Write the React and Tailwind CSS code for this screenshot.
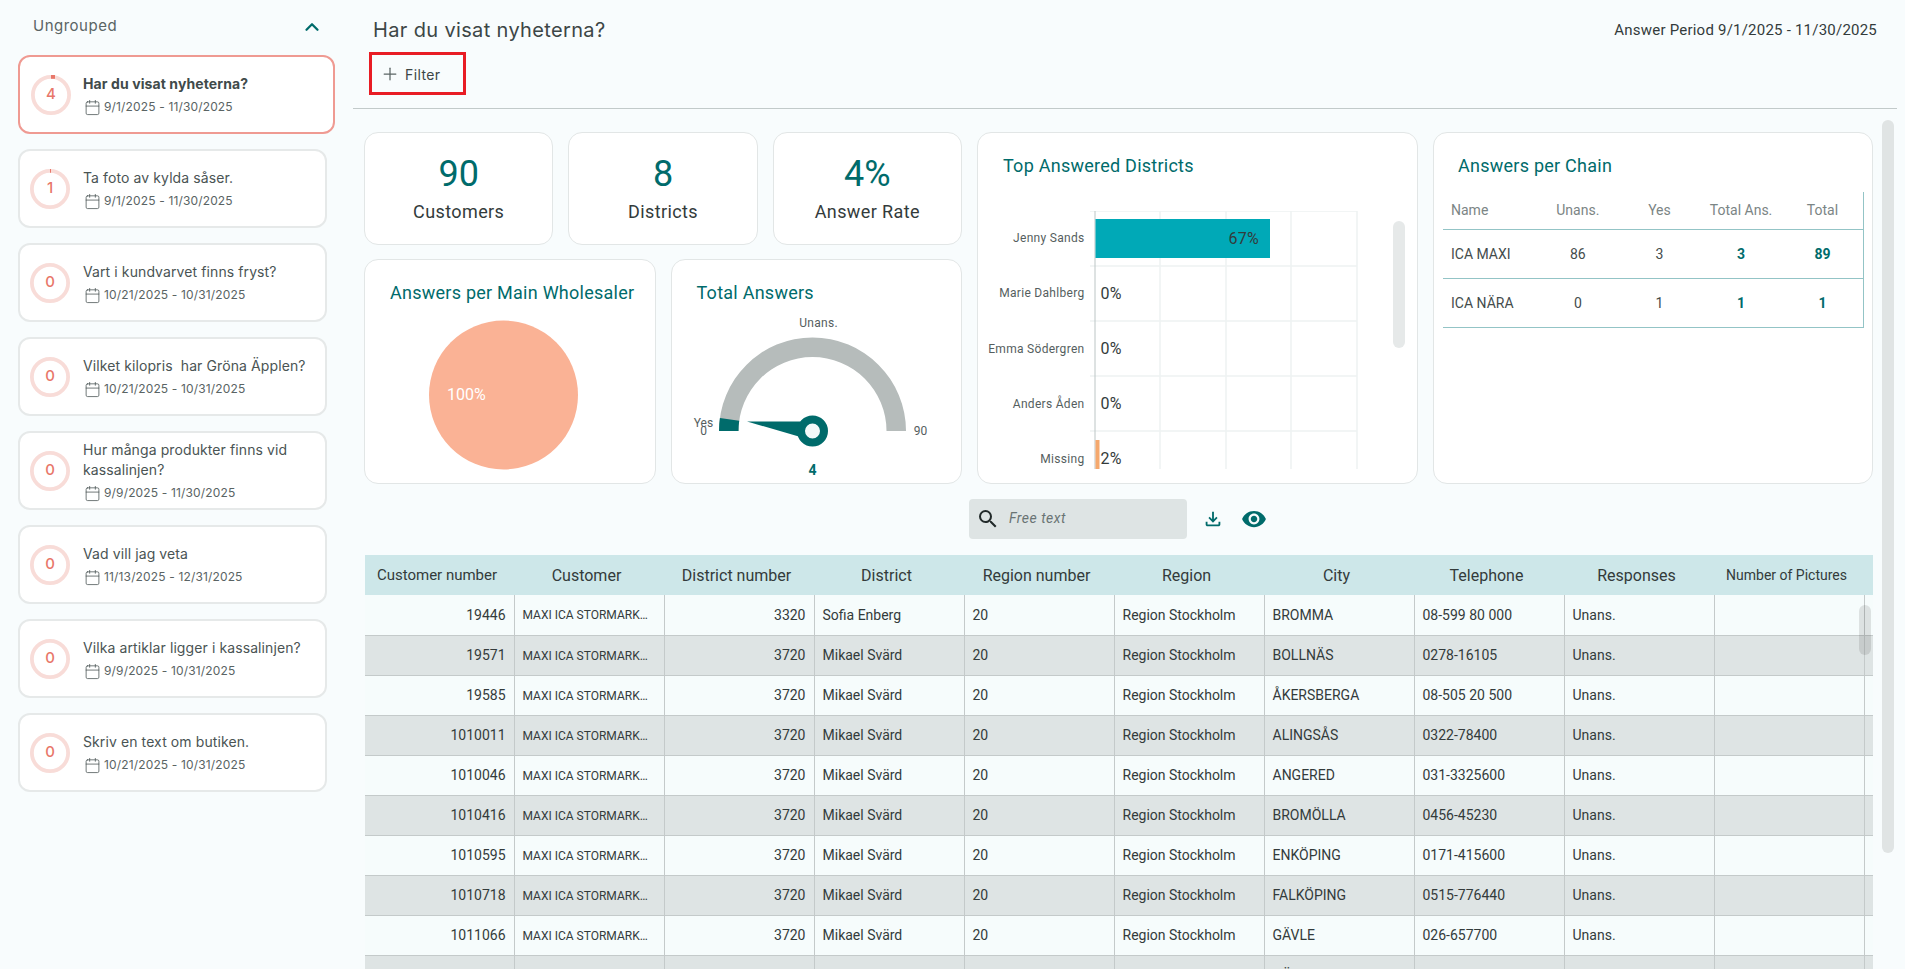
import React from "react";
import { Plus, ChevronUp, Calendar } from "lucide-react";
import { MdSearch, MdOutlineFileDownload, MdVisibility } from "react-icons/md";

const questions = [
  { title: "Har du visat nyheterna?", dates: "9/1/2025 - 11/30/2025", count: 4, tick: 4, active: true },
  { title: "Ta foto av kylda såser.", dates: "9/1/2025 - 11/30/2025", count: 1, tick: 1 },
  { title: "Vart i kundvarvet finns fryst?", dates: "10/21/2025 - 10/31/2025", count: 0, tick: 0 },
  { title: "Vilket kilopris  har Gröna Äpplen?", dates: "10/21/2025 - 10/31/2025", count: 0, tick: 0 },
  { title: "Hur många produkter finns vid kassalinjen?", dates: "9/9/2025 - 11/30/2025", count: 0, tick: 0 },
  { title: "Vad vill jag veta", dates: "11/13/2025 - 12/31/2025", count: 0, tick: 0 },
  { title: "Vilka artiklar ligger i kassalinjen?", dates: "9/9/2025 - 10/31/2025", count: 0, tick: 0 },
  { title: "Skriv en text om butiken.", dates: "10/21/2025 - 10/31/2025", count: 0, tick: 0 },
];

const columns = [
  { label: "Customer number", size: "text-[15px]" },
  { label: "Customer", size: "text-[16px]" },
  { label: "District number", size: "text-[16px]" },
  { label: "District", size: "text-[16px]" },
  { label: "Region number", size: "text-[16px]" },
  { label: "Region", size: "text-[16px]" },
  { label: "City", size: "text-[16px]" },
  { label: "Telephone", size: "text-[16px]" },
  { label: "Responses", size: "text-[16px]" },
  { label: "Number of Pictures", size: "text-[14px]" },
];

const rows = [
  ["19446", "3320", "Sofia Enberg", "BROMMA", "08-599 80 000"],
  ["19571", "3720", "Mikael Svärd", "BOLLNÄS", "0278-16105"],
  ["19585", "3720", "Mikael Svärd", "ÅKERSBERGA", "08-505 20 500"],
  ["1010011", "3720", "Mikael Svärd", "ALINGSÅS", "0322-78400"],
  ["1010046", "3720", "Mikael Svärd", "ANGERED", "031-3325600"],
  ["1010416", "3720", "Mikael Svärd", "BROMÖLLA", "0456-45230"],
  ["1010595", "3720", "Mikael Svärd", "ENKÖPING", "0171-415600"],
  ["1010718", "3720", "Mikael Svärd", "FALKÖPING", "0515-776440"],
  ["1011066", "3720", "Mikael Svärd", "GÄVLE", "026-657700"],
  ["1011120", "3720", "Mikael Svärd", "GÖTEBORG", "031-7000000"],
];

const chainRows = [
  { name: "ICA MAXI", unans: 86, yes: 3, answered: 3, total: 89 },
  { name: "ICA NÄRA", unans: 0, yes: 1, answered: 1, total: 1 },
];

const cell = "border border-t-0 border-[#c4caca] px-2 pt-[1px]";

function ProgressRing({ count, tick }) {
  return (
    <div className="relative w-10 h-10 shrink-0">
      <svg width="40" height="40" viewBox="0 0 40 40">
        <circle cx="20" cy="20" r="18.1" fill="none" stroke="#f8dcd8" strokeWidth="3.8" />
        {tick > 0 && (
          <path d={`M20 1.9 h${tick}`} fill="none" stroke="#e8776a" strokeWidth="3.8" />
        )}
      </svg>
      <span className="absolute inset-0 flex items-center justify-center text-[15px] font-medium text-[#e8776a]">
        {count}
      </span>
    </div>
  );
}

function QuestionCard({ q }) {
  return (
    <div
      className={
        q.active
          ? "h-[79px] w-[317px] flex items-center gap-[12px] pl-[11px] pr-3 bg-white rounded-[12px] border-2 border-[#ef9a92]"
          : "h-[79px] w-[309px] flex items-center gap-[13px] pl-[10px] pr-3 bg-white rounded-[12px] border-2 border-[#e6e9e9]"
      }
    >
      <ProgressRing count={q.count} tick={q.tick} />
      <div className="min-w-0">
        <div
          className={
            q.active
              ? "text-[14px] leading-[20px] font-bold tracking-[0.1px] text-[#404a4a]"
              : "text-[14px] leading-[20px] tracking-[0.1px] text-[#4a5454] whitespace-pre-wrap"
          }
        >
          {q.title}
        </div>
        <div className="flex items-center gap-[3px] mt-[5px] pl-[1px] text-[12px] leading-[16px] tracking-[0.15px] text-[#5a6464]">
          <Calendar size={17} strokeWidth={1.1} className="text-[#4a5454] shrink-0" />
          <span>{q.dates}</span>
        </div>
      </div>
    </div>
  );
}

function StatCard({ value, label }) {
  return (
    <div className="flex-1 h-full bg-white border border-[#e2e6e6] rounded-[14px] flex flex-col items-center pt-[19px]">
      <div className="text-[36px] leading-[44px] text-[#006b6b]">{value}</div>
      <div className="mt-[3px] text-[18px] leading-[26px] tracking-[0.4px] text-[#333b3b]">{label}</div>
    </div>
  );
}

function CardTitle({ children, className }) {
  return <div className={`text-[18px] leading-[24px] tracking-[0.25px] text-[#006b6b] ${className}`}>{children}</div>;
}

function PieCard() {
  return (
    <div className="w-[292px] h-full bg-white border border-[#e2e6e6] rounded-[14px] pt-[21px] pl-[25px]">
      <CardTitle>Answers per Main Wholesaler</CardTitle>
      <svg width="200" height="160" viewBox="0 0 200 160" className="mt-[14px] ml-[38px]" style={{ overflow: "visible" }}>
        <circle cx="75.5" cy="76" r="74.5" fill="#fab295" />
        <text x="19" y="81" fontSize="16" fill="#ffffff">100%</text>
      </svg>
    </div>
  );
}

function GaugeCard() {
  const cx = 140.5;
  const cy = 121;
  return (
    <div className="w-[292px] h-full bg-white border border-[#e2e6e6] rounded-[14px] pt-[21px] pl-[25px] relative">
      <CardTitle>Total Answers</CardTitle>
      <svg width="292" height="172" viewBox="0 0 292 172" className="absolute left-0 top-[50px]">
        <path d={`M${cx - 93.5} ${cy} A93.5 93.5 0 0 1 ${cx + 93.5} ${cy} H${cx + 74} A74 74 0 0 0 ${cx - 74} ${cy} Z`} fill="#b6bcbb" />
        <path d={`M${cx - 93.5} ${cy} A93.5 93.5 0 0 1 ${cx - 92.6} ${cy - 13} L${cx - 73.3} ${cy - 10.3} A74 74 0 0 0 ${cx - 74} ${cy} Z`} fill="#006b6b" />
        <path d={`M${cx - 65.5} ${cy - 9.5} L${cx - 12} ${cy - 9.5} L${cx - 12} ${cy + 6} Z`} fill="#006b6b" />
        <circle cx={cx} cy={cy} r="11.5" fill="#f4f9f9" stroke="#006b6b" strokeWidth="8" />
        <text x={cx + 6} y="17" textAnchor="middle" fontSize="12" letterSpacing="0.3" fill="#555e5e">Unans.</text>
        <text x={cx - 109} y="117" textAnchor="middle" fontSize="12" fill="#555e5e">Yes</text>
        <text x={cx - 109} y="125" textAnchor="middle" fontSize="12" fill="#555e5e">0</text>
        <text x={cx + 108} y="125" textAnchor="middle" fontSize="12" fill="#555e5e">90</text>
        <text x={cx} y="165" textAnchor="middle" fontSize="14" fontWeight="700" fill="#006b6b">4</text>
      </svg>
    </div>
  );
}

function DistrictChart() {
  const labels = [
    { name: "Jenny Sands", y: 162 },
    { name: "Marie Dahlberg", y: 217 },
    { name: "Emma Södergren", y: 273 },
    { name: "Anders Åden", y: 328 },
    { name: "Missing", y: 383 },
  ];
  const hLines = [131, 186, 241, 296, 351];
  const vLines = [183, 249, 314, 380];
  return (
    <svg width="439" height="258" viewBox="0 131 439 258" className="block -ml-[1px]">
      {hLines.map((y) => (
        <line key={y} x1="113" x2="380" y1={y} y2={y} stroke="#eef2f2" strokeWidth="1.5" />
      ))}
      {vLines.map((x) => (
        <line key={x} x1={x} x2={x} y1="131" y2="389" stroke="#eef2f2" strokeWidth="1.5" />
      ))}
      <line x1="118" x2="118" y1="131" y2="389" stroke="#bcc5c5" />
      <rect x="118.5" y="139" width="174.5" height="39" fill="#00a9b7" />
      <rect x="118.5" y="360" width="4" height="29" fill="#f5a86d" />
      <text x="282" y="164" textAnchor="end" fontSize="16" letterSpacing="0.3" fill="#333b3b">67%</text>
      {[["0%", 219], ["0%", 274], ["0%", 329], ["2%", 384]].map(([t, y]) => (
        <text key={y} x="123.5" y={y} fontSize="16" letterSpacing="0.3" fill="#333b3b">{t}</text>
      ))}
      {labels.map((l) => (
        <text key={l.name} x="107.5" y={l.y} textAnchor="end" fontSize="12" letterSpacing="0.3" fill="#555e5e">{l.name}</text>
      ))}
    </svg>
  );
}

function TopDistrictsCard() {
  return (
    <div className="w-[441px] h-full bg-white border border-[#e2e6e6] rounded-[14px] relative overflow-hidden">
      <CardTitle className="pt-[21px] pl-[25px] h-[78px]">Top Answered Districts</CardTitle>
      <DistrictChart />
      <div className="absolute left-[415px] top-[88px] w-3 h-[127px] rounded-md bg-[#e6e9e9]" />
    </div>
  );
}

function ChainCard() {
  return (
    <div className="w-[440px] h-full bg-white border border-[#e2e6e6] rounded-[14px] pt-[21px]">
      <CardTitle className="pl-[24px]">Answers per Chain</CardTitle>
      <table className="ml-[9px] mt-[14px] w-[421px] table-fixed border-r border-[#93c4c6] text-[14px]">
        <thead>
          <tr className="h-[37px] border-b border-[#93c4c6] text-[#7b8585]">
            <th className="w-[94px] pl-2 text-left font-normal">Name</th>
            <th className="font-normal">Unans.</th>
            <th className="font-normal">Yes</th>
            <th className="font-normal">Total Ans.</th>
            <th className="font-normal">Total</th>
          </tr>
        </thead>
        <tbody>
          {chainRows.map((r) => (
            <tr key={r.name} className="h-[49px] border-b border-[#93c4c6] text-[#444c4c] text-center">
              <td className="pl-2 pt-[2px] text-left">{r.name}</td>
              <td className="pt-[2px]">{r.unans}</td>
              <td className="pt-[2px]">{r.yes}</td>
              <td className="pt-[2px] font-bold text-[#006b6b]">{r.answered}</td>
              <td className="pt-[2px] font-bold text-[#006b6b]">{r.total}</td>
            </tr>
          ))}
        </tbody>
      </table>
    </div>
  );
}

function CustomerTable() {
  return (
    <div className="relative mt-[16px] ml-[1px] w-[1508px] overflow-hidden">
      <table className="w-[1508px] table-fixed border-collapse text-[14px] text-[#333b3b]">
        <colgroup>
          <col className="w-[149px]" />
          {columns.slice(1).map((c) => (
            <col key={c.label} className="w-[150px]" />
          ))}
          <col className="w-[9px]" />
        </colgroup>
        <thead>
          <tr className="h-[40px] bg-[#cde7e9]">
            {columns.map((c) => (
              <th key={c.label} className={`font-normal whitespace-nowrap pr-[5px] pt-[1px] ${c.size}`}>
                {c.label}
              </th>
            ))}
            <th />
          </tr>
        </thead>
        <tbody>
          {rows.map((r, i) => (
            <tr key={r[0]} className={i % 2 === 0 ? "h-[40px] bg-[#f6fcfc]" : "h-[40px] bg-[#dee4e4]"}>
              <td className={`${cell} border-l-0 text-right`}>{r[0]}</td>
              <td className={`${cell} text-[12px] truncate`}>MAXI ICA STORMARKNAD</td>
              <td className={`${cell} text-right`}>{r[1]}</td>
              <td className={cell}>{r[2]}</td>
              <td className={cell}>20</td>
              <td className={cell}>Region Stockholm</td>
              <td className={cell}>{r[3]}</td>
              <td className={cell}>{r[4]}</td>
              <td className={cell}>Unans.</td>
              <td className={cell} />
              <td className="border border-r-0 border-t-0 border-[#c4caca]" />
            </tr>
          ))}
        </tbody>
      </table>
      <div className="absolute right-[2px] top-[50px] w-3 h-[50px] rounded-md bg-black/10" />
    </div>
  );
}

export default function App() {
  return (
    <div className="flex h-[969px] w-[1905px] overflow-hidden bg-[#f8fcfd] font-['Roboto',sans-serif]">
      <aside className="w-[353px] shrink-0 pl-[18px] font-['Inter',sans-serif]">
        <div className="h-[55px] flex items-center justify-between pl-[15px] pr-[4px] pb-[2px] w-[309px]">
          <span className="text-[15px] tracking-[0.5px] text-[#5a6464]">Ungrouped</span>
          <ChevronUp size={22} strokeWidth={2.5} className="text-[#006b6b]" />
        </div>
        <div className="flex flex-col gap-[15px]">
          {questions.map((q) => (
            <QuestionCard key={q.title} q={q} />
          ))}
        </div>
      </aside>

      <main className="flex-1 min-w-0 pr-2 flex flex-col">
        <header className="h-[109px] shrink-0 border-b border-[#c2caca]">
          <div className="flex items-center justify-between pl-[20px] pr-[20px] pt-[8px] h-[52px]">
            <h1 className="font-['Inter',sans-serif] text-[20px] leading-[26px] tracking-[0.35px] text-[#3c4646]">
              Har du visat nyheterna?
            </h1>
            <span className="text-[15px] tracking-[0.22px] text-[#333b3b]">Answer Period 9/1/2025 - 11/30/2025</span>
          </div>
          <button className="ml-[16px] w-[97px] h-[43px] border-[3px] border-[#e81c24] flex items-center gap-[5px] pl-[8px] pt-[1px] font-['Inter',sans-serif] text-[14px] tracking-[0.4px] text-[#3c4646]">
            <Plus size={20} strokeWidth={1.5} className="text-[#5a6464]" />
            Filter
          </button>
        </header>

        <div className="flex-1 min-h-0 flex pl-[11px] pt-[23px]">
          <div className="w-[1509px] shrink-0">
            <div className="flex gap-[15px] h-[352px]">
              <div className="w-[598px] flex flex-col gap-[14px]">
                <div className="flex gap-[15px] h-[113px]">
                  <StatCard value="90" label="Customers" />
                  <StatCard value="8" label="Districts" />
                  <StatCard value="4%" label="Answer Rate" />
                </div>
                <div className="flex gap-[15px] h-[225px]">
                  <PieCard />
                  <GaugeCard />
                </div>
              </div>
              <TopDistrictsCard />
              <ChainCard />
            </div>

            <div className="mt-[15px] flex items-center ml-[605px] h-[40px]">
              <div className="w-[218px] h-[40px] rounded-[4px] bg-[#dee4e4] flex items-center pl-[7px] gap-[9px]">
                <MdSearch size={24} className="text-[#222a2a]" />
                <span className="italic text-[14px] tracking-[0.5px] text-[#6a7474] pb-[1px]">Free text</span>
              </div>
              <MdOutlineFileDownload size={22} className="ml-[15px] text-[#006b6b]" />
              <MdVisibility size={26} className="ml-[17px] text-[#006b6b]" />
            </div>

            <CustomerTable />
          </div>
          <div className="ml-[9px] mt-[-12px] w-3 h-[733px] rounded-md bg-[#e0e4e4]" />
        </div>
      </main>
    </div>
  );
}
